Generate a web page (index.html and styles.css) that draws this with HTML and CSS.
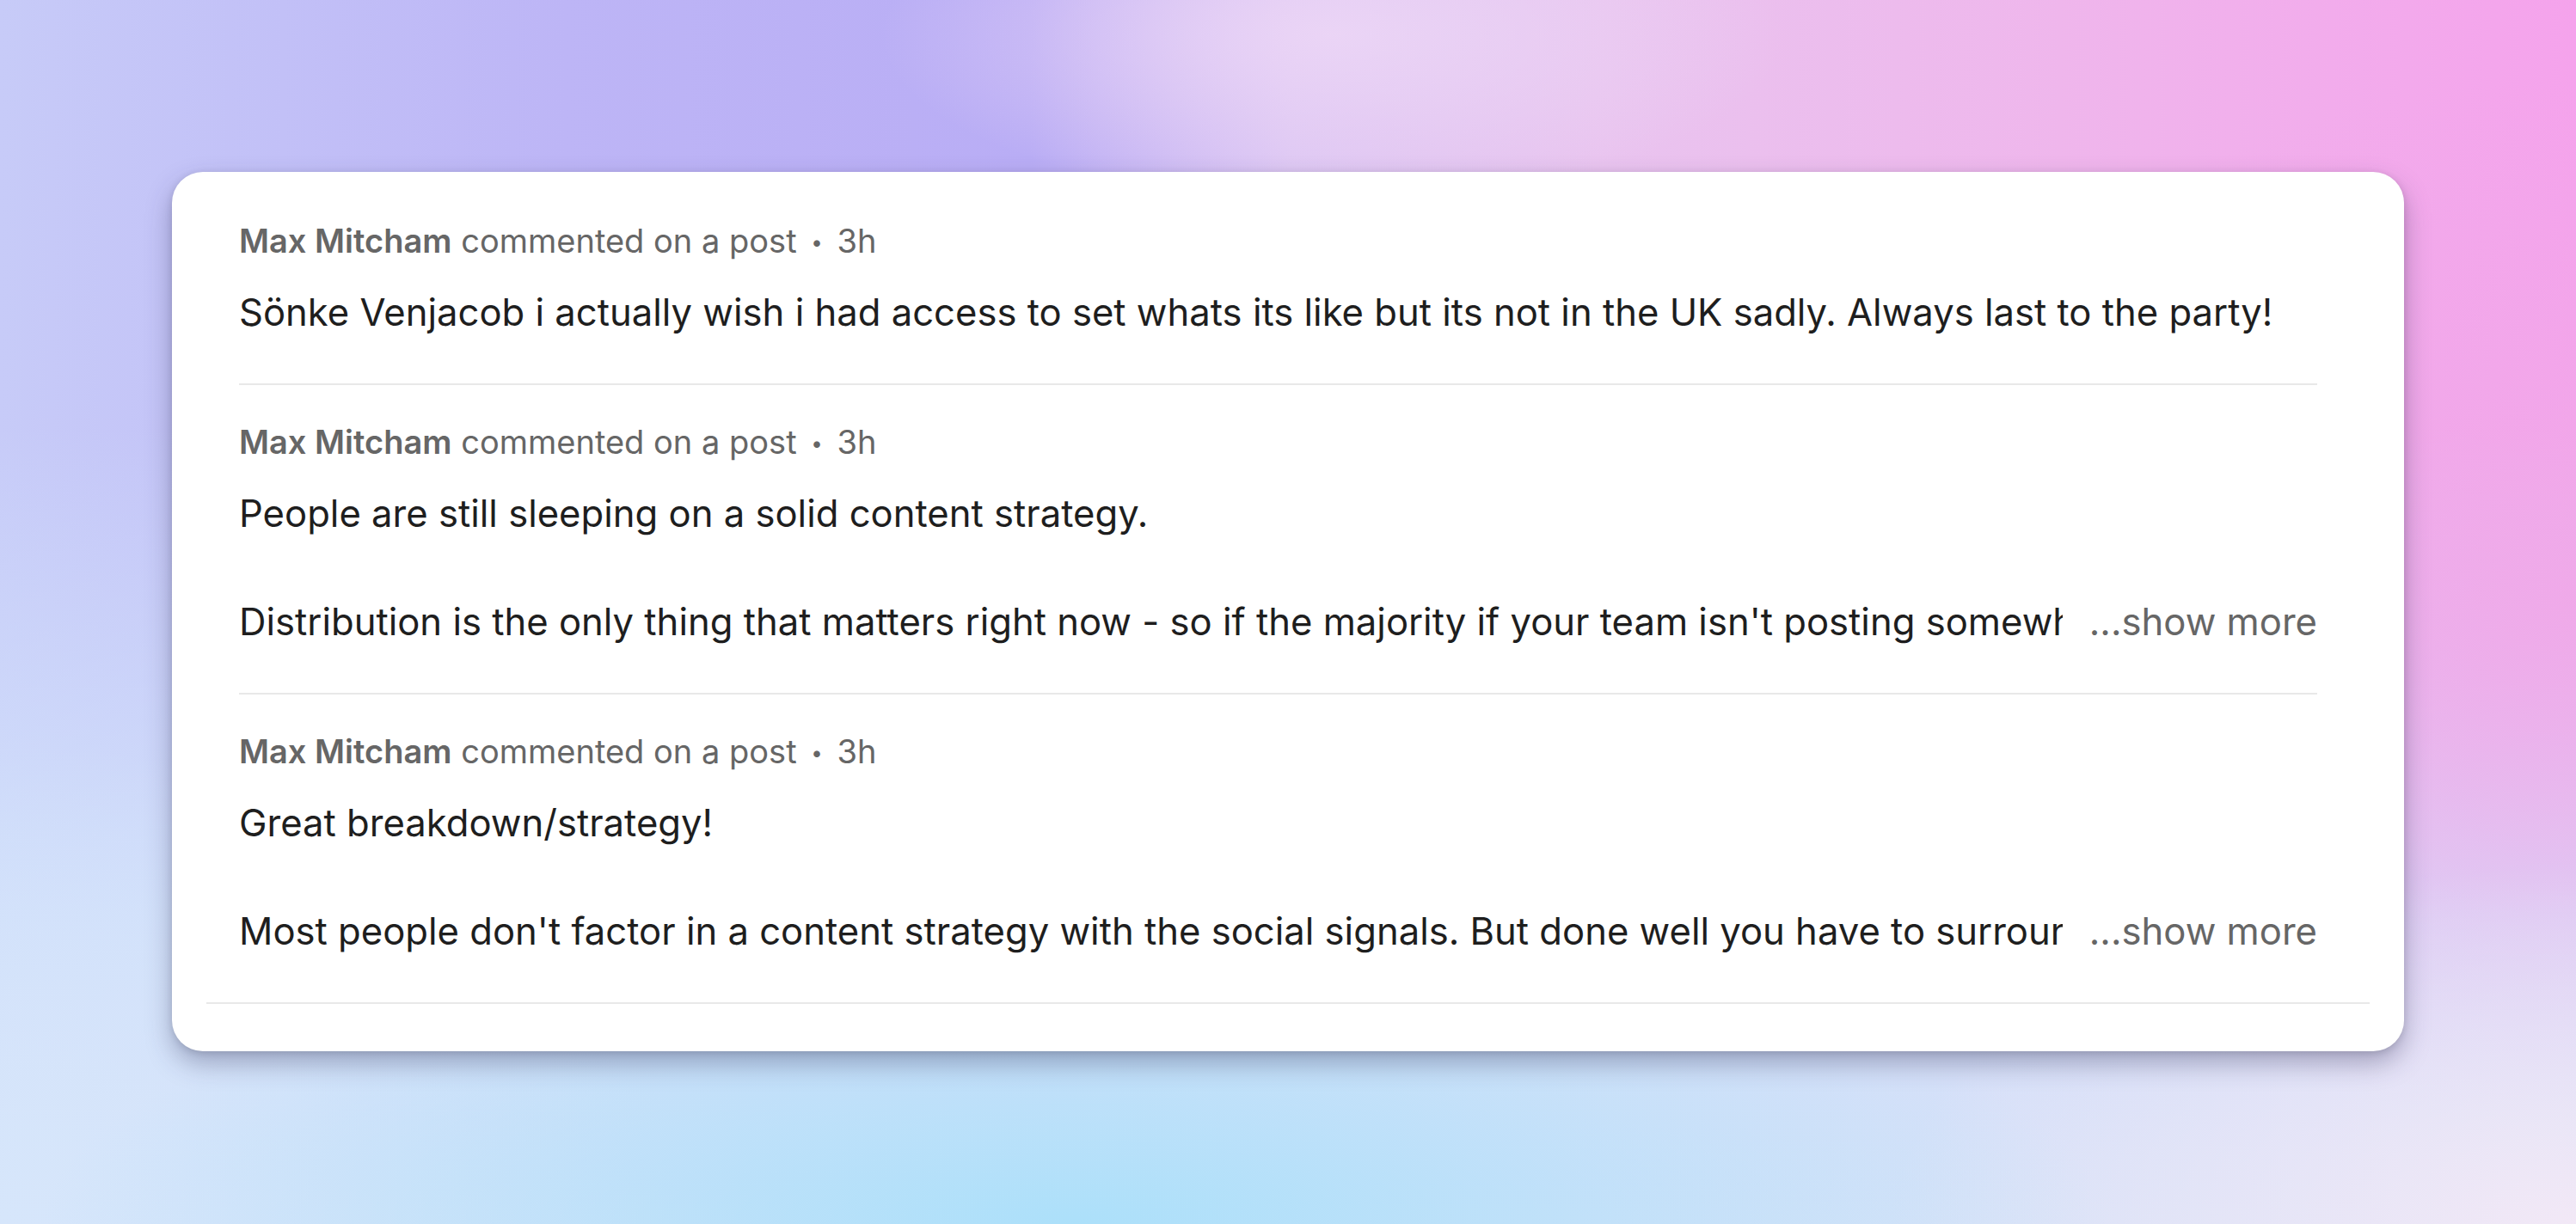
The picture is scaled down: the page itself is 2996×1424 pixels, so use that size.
FILE: index.html
```html
<!DOCTYPE html>
<html lang="en">
<head>
<meta charset="utf-8">
<title>Activity</title>
<link rel="stylesheet" href="styles.css">
</head>
<body>
<main class="stage">
  <section class="card">
    <div class="feed">
      <article class="item">
        <div class="meta"><span class="name">Max Mitcham</span> commented on a post <span class="dot">•</span> 3h</div>
        <div class="body">
          <p class="line">Sönke Venjacob i actually wish i had access to set whats its like but its not in the UK sadly. Always last to the party!</p>
        </div>
      </article>
      <article class="item">
        <div class="meta"><span class="name">Max Mitcham</span> commented on a post <span class="dot">•</span> 3h</div>
        <div class="body">
          <p class="line">People are still sleeping on a solid content strategy.</p>
          <p class="line blank"></p>
          <div class="line trunc">
            <span class="clip">Distribution is the only thing that matters right now - so if the majority if your team isn't posting somewhere consistently you are missing out</span>
            <span class="more">...show more</span>
          </div>
        </div>
      </article>
      <article class="item">
        <div class="meta"><span class="name">Max Mitcham</span> commented on a post <span class="dot">•</span> 3h</div>
        <div class="body">
          <p class="line">Great breakdown/strategy!</p>
          <p class="line blank"></p>
          <div class="line trunc">
            <span class="clip">Most people don't factor in a content strategy with the social signals. But done well you have to surround your posts with engagement</span>
            <span class="more">...show more</span>
          </div>
        </div>
      </article>
    </div>
    <div class="rule"></div>
  </section>
</main>
</body>
</html>
```

FILE: styles.css
```css
html, body {
  margin: 0;
  padding: 0;
}

body {
  width: 2996px;
  height: 1424px;
  overflow: hidden;
  font-family: Inter, "Liberation Sans", Arial, sans-serif;
  background-color: #c9cdf8;
  background-image:
    radial-gradient(ellipse 700px 260px at 1550px 40px, rgba(236, 214, 246, 0.9), rgba(236, 214, 246, 0) 75%),
    radial-gradient(ellipse 1500px 420px at 1250px 1424px, rgba(172, 224, 250, 1), rgba(172, 224, 250, 0) 80%),
    radial-gradient(ellipse 1000px 520px at 2996px 1424px, rgba(242, 232, 246, 1), rgba(242, 232, 246, 0) 80%),
    radial-gradient(ellipse 1000px 700px at 0px 1424px, rgba(214, 230, 251, 1), rgba(214, 230, 251, 0) 80%),
    radial-gradient(ellipse 1000px 760px at 2996px 700px, rgba(240, 168, 232, 0.9), rgba(240, 168, 232, 0) 80%),
    linear-gradient(180deg, rgba(205, 216, 251, 0) 0%, rgba(205, 216, 251, 0) 35%, rgba(210, 226, 251, 0.9) 75%, rgba(215, 226, 248, 1) 100%),
    linear-gradient(90deg, #c7cbf8 0%, #bdb5f6 22%, #b9adf5 40%, #dcc6f3 50%, #e9c4ef 62%, #efb6ec 80%, #f5a3ec 100%);
}

.stage {
  padding: 200px 0 0 200px;
}

.card {
  width: 2596px;
  box-sizing: border-box;
  padding: 14px 40px 55px;
  background: #ffffff;
  border-radius: 36px;
  box-shadow: 0 14px 30px rgba(50, 50, 90, 0.35), 0 2px 8px rgba(0, 0, 0, 0.12);
}

.feed {
  padding: 0 61px 0 38px;
}

.item {
  padding: 41px 0 51px;
  border-bottom: 2px solid #e8e8e8;
}

.item:last-child {
  border-bottom: none;
  padding-bottom: 51px;
}

.meta {
  font-size: 38px;
  line-height: 50px;
  color: #666666;
  white-space: nowrap;
}

.name {
  font-weight: 600;
}

.dot {
  font-size: 24px;
  vertical-align: 4px;
  margin: 0 6px;
}

.body {
  margin-top: 25px;
  font-size: 43.6px;
  line-height: 63px;
  color: #1e1e1e;
}

.line {
  margin: 0;
  height: 63px;
  white-space: nowrap;
}

.trunc {
  display: flex;
}

.clip {
  flex: 1 1 auto;
  min-width: 0;
  overflow: hidden;
  white-space: nowrap;
}

.more {
  flex: 0 0 auto;
  margin-left: 31px;
  color: #666666;
}

.rule {
  border-top: 2px solid #e9e9e9;
}
```
